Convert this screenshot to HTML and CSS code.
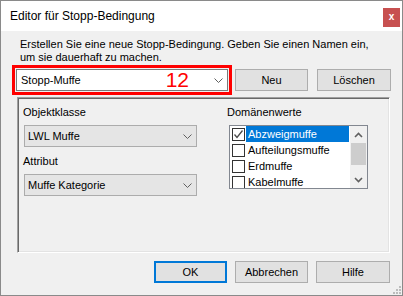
FILE: index.html
```html
<!DOCTYPE html>
<html lang="de">
<head>
    <meta charset="UTF-8">
    <meta name="viewport" content="width=device-width, initial-scale=1.0">
    <title>Editor für Stopp-Bedingung</title>
    <link rel="stylesheet" href="styles.css">
</head>
<body>
    <div class="window">
        <div class="titlebar">
            <span class="title">Editor für Stopp-Bedingung</span>
            <span class="close">x</span>
        </div>

        <div class="content">
            <p class="intro">Erstellen Sie eine neue Stopp-Bedingung. Geben Sie einen Namen ein,<br>um sie dauerhaft zu machen.</p>

            <div class="name-row">
                <div class="combo">
                    <span class="combo-text">Stopp-Muffe</span>
                    <span class="marker">12</span>
                    <svg class="chevron" width="9" height="5" viewBox="0 0 9 5"><path d="M0.5 0.5 L4.5 4.5 L8.5 0.5" fill="none" stroke="#606060" stroke-width="1"/></svg>
                </div>
                <button class="btn">Neu</button>
                <button class="btn btn-wide">Löschen</button>
            </div>

            <div class="group">
                <div class="col-left">
                    <label class="field-label">Objektklasse</label>
                    <div class="select">
                        <span>LWL Muffe</span>
                        <svg width="9" height="5" viewBox="0 0 9 5"><path d="M0.5 0.5 L4.5 4.5 L8.5 0.5" fill="none" stroke="#606060" stroke-width="1"/></svg>
                    </div>
                    <label class="field-label second">Attribut</label>
                    <div class="select">
                        <span>Muffe Kategorie</span>
                        <svg width="9" height="5" viewBox="0 0 9 5"><path d="M0.5 0.5 L4.5 4.5 L8.5 0.5" fill="none" stroke="#606060" stroke-width="1"/></svg>
                    </div>
                </div>

                <div class="col-right">
                    <label class="field-label">Domänenwerte</label>
                    <div class="checklist">
                        <div class="items">
                            <div class="item">
                                <span class="box">
                                    <svg width="11" height="11" viewBox="0 0 11 11"><path d="M1.5 5.5 L4 8.5 L9.5 1.5" fill="none" stroke="#4a4a4a" stroke-width="1.3"/></svg>
                                </span>
                                <span class="item-text selected">Abzweigmuffe</span>
                            </div>
                            <div class="item"><span class="box"></span><span class="item-text">Aufteilungsmuffe</span></div>
                            <div class="item"><span class="box"></span><span class="item-text">Erdmuffe</span></div>
                            <div class="item"><span class="box"></span><span class="item-text">Kabelmuffe</span></div>
                        </div>
                        <div class="scrollbar">
                            <div class="arrow">
                                <svg width="9" height="6" viewBox="0 0 9 6"><path d="M1 5 L4.5 1.5 L8 5" fill="none" stroke="#606060" stroke-width="1.6"/></svg>
                            </div>
                            <div class="thumb"></div>
                            <div class="arrow arrow-down">
                                <svg width="9" height="6" viewBox="0 0 9 6"><path d="M1 1 L4.5 4.5 L8 1" fill="none" stroke="#606060" stroke-width="1.6"/></svg>
                            </div>
                        </div>
                    </div>
                </div>
            </div>

            <div class="footer">
                <button class="btn btn-default">OK</button>
                <button class="btn">Abbrechen</button>
                <button class="btn btn-wide">Hilfe</button>
            </div>
        </div>

        <svg class="grip" width="8" height="8" viewBox="0 0 8 8">
            <rect x="6" y="0" width="2" height="2" fill="#bcbcbc"/>
            <rect x="3" y="3" width="2" height="2" fill="#bcbcbc"/>
            <rect x="6" y="3" width="2" height="2" fill="#bcbcbc"/>
            <rect x="0" y="6" width="2" height="2" fill="#bcbcbc"/>
            <rect x="3" y="6" width="2" height="2" fill="#bcbcbc"/>
            <rect x="6" y="6" width="2" height="2" fill="#bcbcbc"/>
        </svg>
    </div>
</body>
</html>
```

FILE: styles.css
```css
body {
    margin: 0;
    padding: 0;
    background-color: #f0f0f0;
}
.window {
    position: relative;
    width: 403px;
    height: 296px;
    box-sizing: border-box;
    border: 1px solid #8a8a8a;
    background-color: #f0f0f0;
    font-family: "Liberation Sans", Arial, sans-serif;
    font-size: 11px;
    color: #000;
    overflow: hidden;
}
.titlebar {
    display: flex;
    align-items: flex-start;
    height: 30px;
    background-color: #fff;
}
.title {
    padding-left: 9px;
    line-height: 30px;
    font-size: 12px;
    color: #000;
}
.close {
    margin-left: auto;
    margin-top: 7px;
    margin-right: 2px;
    width: 17px;
    height: 19px;
    background-color: #c75050;
    color: #fff;
    font-weight: bold;
    font-size: 10px;
    line-height: 18px;
    text-align: center;
}
.content {
    padding-top: 7px;
}
.intro {
    margin: 0 0 0 19px;
    line-height: 13px;
}
.name-row {
    display: flex;
    align-items: flex-start;
    gap: 7px;
    margin-top: 5px;
    padding-left: 15px;
}
.combo {
    display: flex;
    align-items: center;
    width: 212px;
    height: 22px;
    box-sizing: border-box;
    border: 1px solid #7a7a7a;
    background-color: #fff;
    padding-left: 4px;
    outline: 3px solid #ff0000;
    outline-offset: 1px;
}
.combo-text {
    flex: 1;
}
.marker {
    color: #f00;
    font-size: 21px;
    line-height: 20px;
}
.chevron {
    margin-left: 25px;
    margin-right: 4px;
}
.btn {
    width: 73px;
    height: 22px;
    box-sizing: border-box;
    padding: 0;
    border: 1px solid #adadad;
    background-color: #e1e1e1;
    font-family: "Liberation Sans", Arial, sans-serif;
    font-size: 11px;
    color: #000;
}
.name-row .btn + .btn {
    margin-left: 2px;
}
.btn-wide {
    width: 74px;
}
.btn-default {
    border: 2px solid #0078d7;
}
.group {
    display: flex;
    margin: 6px 0 0 16px;
    width: 373px;
    height: 156px;
    box-sizing: border-box;
    padding: 8px 0 0 5px;
    border: 1px solid;
    border-color: #a0a0a0 #fff #fff #a0a0a0;
    box-shadow: inset 1px 1px 0 #696969, inset -1px -1px 0 #e3e3e3;
}
.col-left {
    width: 174px;
}
.field-label {
    display: block;
    line-height: 13px;
}
.field-label.second {
    margin-top: 8px;
}
.select {
    display: flex;
    align-items: center;
    justify-content: space-between;
    margin: 6px 0 0 1px;
    width: 173px;
    height: 22px;
    box-sizing: border-box;
    border: 1px solid #acacac;
    background-color: #e5e5e5;
    padding: 0 4px 0 3px;
}
.col-right {
    margin-left: 30px;
}
.checklist {
    display: flex;
    margin: 6px 0 0 2px;
    width: 139px;
    height: 64px;
    box-sizing: border-box;
    border: 1px solid #828790;
    background-color: #fff;
    overflow: hidden;
}
.items {
    flex: 1;
}
.item {
    display: flex;
    align-items: center;
    height: 16px;
    padding-left: 2px;
}
.box {
    display: flex;
    align-items: center;
    justify-content: center;
    width: 13px;
    height: 13px;
    box-sizing: border-box;
    border: 1px solid #333;
    background-color: #fff;
}
.item-text {
    flex: 1;
    margin-left: 1px;
    margin-right: 1px;
    padding-left: 2px;
    line-height: 16px;
}
.item-text.selected {
    background-color: #0078d7;
    color: #fff;
}
.scrollbar {
    display: flex;
    flex-direction: column;
    width: 17px;
    background-color: #f0f0f0;
}
.arrow {
    display: flex;
    align-items: center;
    justify-content: center;
    height: 17px;
}
.arrow-down {
    margin-top: auto;
}
.thumb {
    margin: 0 1px;
    height: 22px;
    background-color: #cdcdcd;
}
.footer {
    display: flex;
    gap: 8px;
    margin: 8px 0 0 153px;
}
.grip {
    position: absolute;
    right: 1px;
    bottom: 1px;
}
```
